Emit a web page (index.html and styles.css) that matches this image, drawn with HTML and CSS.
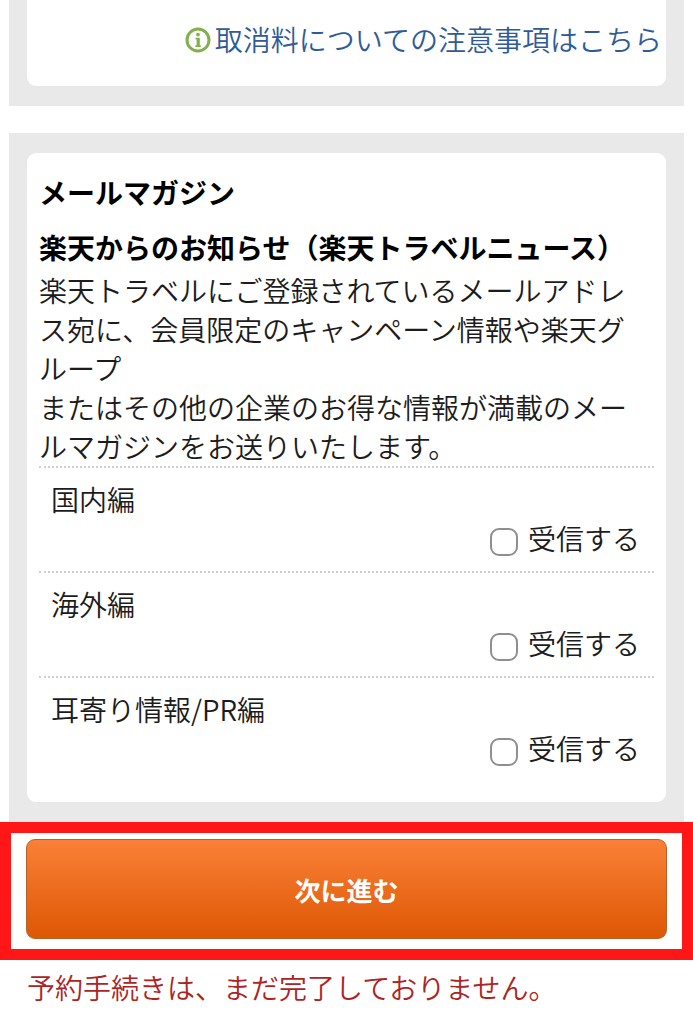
FILE: index.html
```html
<!DOCTYPE html>
<html lang="ja">
<head>
    <meta charset="UTF-8">
    <meta name="viewport" content="width=device-width, initial-scale=1.0">
    <title>予約手続き</title>
    <link rel="stylesheet" href="styles.css">
</head>
<body>
    <div class="panel panel-cancel">
        <div class="card card-cancel">
            <a class="cancel-link" href="#">
                <svg class="icon-info" viewBox="0 0 26 26" aria-hidden="true">
                    <circle cx="13" cy="13" r="11" fill="#fff" stroke="#83b04c" stroke-width="3" />
                    <circle cx="13" cy="7.6" r="1.9" fill="#83b04c" />
                    <path d="M10.6 10.8h4.2v7.4h1v1.8h-5.4v-1.8h1.2v-5.6h-1z" fill="#83b04c" />
                </svg>
                <span>取消料についての注意事項はこちら</span>
            </a>
        </div>
    </div>

    <form>
        <div class="panel panel-mail">
            <div class="card card-mail">
                <h2 class="title">メールマガジン</h2>
                <h3 class="sub-title">楽天からのお知らせ（楽天トラベルニュース）</h3>
                <p class="text">楽天トラベルにご登録されているメールアドレス宛に、会員限定のキャンペーン情報や楽天グループ<br>またはその他の企業のお得な情報が満載のメールマガジンをお送りいたします。</p>
                <ul class="news-list">
                    <li class="news-item">
                        <span>国内編</span>
                        <label class="receive"><input type="checkbox" class="check" name="domestic">受信する</label>
                    </li>
                    <li class="news-item">
                        <span>海外編</span>
                        <label class="receive"><input type="checkbox" class="check" name="overseas">受信する</label>
                    </li>
                    <li class="news-item">
                        <span>耳寄り情報/PR編</span>
                        <label class="receive"><input type="checkbox" class="check" name="pr">受信する</label>
                    </li>
                </ul>
            </div>
        </div>

        <div class="submit-area">
            <button type="submit" class="btn-next">次に進む</button>
        </div>
    </form>

    <p class="notice">予約手続きは、まだ完了しておりません。</p>
</body>
</html>
```

FILE: styles.css
```css
* {
    box-sizing: border-box;
}

body {
    margin: 0;
    background-color: #fff;
    color: #1c1c1c;
    font-family: "Noto Sans CJK JP", sans-serif;
    font-size: 28px;
    font-weight: 350;
    line-height: 39px;
}

h2,
h3,
p,
ul {
    margin: 0;
    padding: 0;
}

.panel {
    margin: 0 9px;
    padding: 20px 18px;
    background-color: #e9e9e9;
}

.card {
    border-radius: 9px;
    background-color: #fff;
}

.panel-cancel {
    margin-bottom: 27px;
    padding-top: 0;
}

.card-cancel {
    display: flex;
    justify-content: flex-end;
    padding: 20px 4px 27px;
    border-radius: 0 0 9px 9px;
}

.cancel-link {
    display: flex;
    align-items: center;
    gap: 4px;
    color: #2f5c98;
    text-decoration: none;
}

.icon-info {
    width: 26px;
    height: 26px;
}

.card-mail {
    padding: 20px 12px 34px;
}

.title,
.sub-title {
    color: #000;
    font-size: 28px;
    font-weight: 700;
}

.title {
    margin-bottom: 16px;
}

.sub-title {
    margin-bottom: 4px;
}

.text {
    padding-right: 14px;
}

.news-list {
    list-style: none;
}

.news-item {
    display: flex;
    flex-direction: column;
    padding: 12px 14px 13px 12px;
    border-top: 2px dotted #cfcfcf;
}

.news-item:last-child {
    padding-bottom: 0;
}

.receive {
    display: flex;
    align-items: center;
    align-self: flex-end;
    gap: 10px;
}

.check {
    appearance: none;
    width: 28px;
    height: 28px;
    margin: 6px 0 0;
    border: 2px solid #8f8f8f;
    border-radius: 9px;
    background-color: #fff;
}

.check:checked {
    background-color: #2f5c98;
}

/* 赤枠 */
.submit-area {
    padding: 6px 15px 10px;
    border: 11px solid #ff1616;
}

.btn-next {
    display: block;
    width: 100%;
    height: 100px;
    border: 1px solid #b8622a;
    border-radius: 9px;
    background: linear-gradient(#fb8138, #dd5704) border-box;
    color: #fff;
    font-family: inherit;
    font-size: 26px;
    font-weight: 700;
    cursor: pointer;
}

.notice {
    padding: 8px 27px 16px;
    color: #ad2424;
}
```
